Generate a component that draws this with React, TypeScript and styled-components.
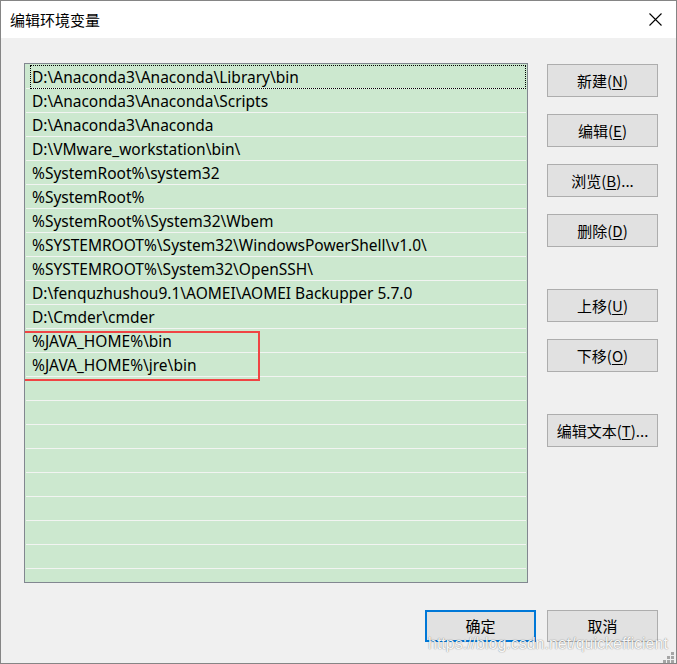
import React from "react";
import styled, { createGlobalStyle } from "styled-components";

const GlobalStyle = createGlobalStyle`
  html, body { margin: 0; padding: 0; background: #ffffff; }
  * { box-sizing: border-box; }
`;

const UI_FONT = `"Noto Sans", "Noto Sans CJK SC", sans-serif`;

const Window = styled.div`
  position: relative;
  width: 677px;
  height: 664px;
  border: 1px solid #858585;
  background: #f0f0f0;
  display: flex;
  flex-direction: column;
  font-family: ${UI_FONT};
  color: #000;
  overflow: hidden;
`;

const TitleBar = styled.div`
  height: 37px;
  flex: none;
  background: #ffffff;
  display: flex;
  align-items: center;
  justify-content: space-between;
  padding-left: 9px;
`;

const Title = styled.span`
  font-family: "Noto Sans CJK SC", sans-serif;
  font-size: 15px;
  line-height: 20px;
`;

const CloseButton = styled.div`
  width: 42px;
  height: 37px;
  display: flex;
  align-items: center;
  justify-content: center;
`;

const Body = styled.div`
  flex: 1;
  display: flex;
  flex-direction: column;
  padding: 25px 18px 0 23px;
`;

const MainRow = styled.div`
  display: flex;
  gap: 19px;
`;

const List = styled.div`
  position: relative;
  width: 504px;
  height: 520px;
  border: 1px solid #828790;
  background: #cce8cf;
  padding: 1px;
  overflow: hidden;
`;

const Row = styled.div<{ $focused?: boolean }>`
  position: relative;
  height: 24px;
  border-bottom: 1px solid #f2f4f2;
  padding-left: 6px;
  font-size: 15.5px;
  line-height: 24px;
  white-space: nowrap;
  ${(p) =>
    p.$focused &&
    `
    &::before {
      content: "";
      position: absolute;
      left: 4px;
      right: 0;
      top: 0;
      bottom: -1px;
      border: 1px dotted #000;
    }
  `}
`;

const Highlight = styled.div`
  position: absolute;
  left: -2px;
  top: 267px;
  width: 237px;
  height: 50px;
  border: 2px solid #f04444;
  pointer-events: none;
`;

const ButtonColumn = styled.div`
  display: flex;
  flex-direction: column;
  gap: 17px;
  padding-top: 1px;
`;

const Button = styled.div<{ $spaced?: boolean; $default?: boolean }>`
  width: 111px;
  height: ${(p) => (p.$default ? "32px" : "33px")};
  margin-top: ${(p) => (p.$spaced ? "25px" : "0")};
  background: #e1e1e1;
  border: ${(p) => (p.$default ? "2px solid #0078d7" : "1px solid #adadad")};
  display: flex;
  align-items: center;
  justify-content: center;
  font-family: "Noto Sans CJK SC", sans-serif;
  font-size: 15px;
  line-height: 20px;
  white-space: nowrap;
`;

const FooterButton = styled(Button)`
  height: 32px;
`;

const Key = styled.span`
  text-decoration: underline;
  text-underline-offset: 2px;
`;

const Footer = styled.div`
  margin-top: 27px;
  display: flex;
  justify-content: flex-end;
  gap: 11px;
`;

const Watermark = styled.div`
  position: absolute;
  left: 427px;
  top: 634px;
  font-family: "Liberation Sans", Arial, sans-serif;
  font-size: 16px;
  line-height: 18px;
  color: rgba(255, 255, 255, 0.95);
  text-shadow: 0 0 1px rgba(0, 0, 0, 0.45), 0 0 2px rgba(0, 0, 0, 0.15);
  white-space: nowrap;
  pointer-events: none;
`;

const Grip = styled.svg`
  position: absolute;
  right: 2px;
  bottom: 0px;
`;

const paths = [
  "D:\\Anaconda3\\Anaconda\\Library\\bin",
  "D:\\Anaconda3\\Anaconda\\Scripts",
  "D:\\Anaconda3\\Anaconda",
  "D:\\VMware_workstation\\bin\\",
  "%SystemRoot%\\system32",
  "%SystemRoot%",
  "%SystemRoot%\\System32\\Wbem",
  "%SYSTEMROOT%\\System32\\WindowsPowerShell\\v1.0\\",
  "%SYSTEMROOT%\\System32\\OpenSSH\\",
  "D:\\fenquzhushou9.1\\AOMEI\\AOMEI Backupper 5.7.0",
  "D:\\Cmder\\cmder",
  "%JAVA_HOME%\\bin",
  "%JAVA_HOME%\\jre\\bin",
];

const TOTAL_ROWS = 22;

type Btn = { label: string; key: string; tail?: string; spaced?: boolean };

const sideButtons: Btn[] = [
  { label: "新建", key: "N" },
  { label: "编辑", key: "E" },
  { label: "浏览", key: "B", tail: "..." },
  { label: "删除", key: "D" },
  { label: "上移", key: "U", spaced: true },
  { label: "下移", key: "O" },
  { label: "编辑文本", key: "T", tail: "...", spaced: true },
];

export default function App() {
  const rows = Array.from({ length: TOTAL_ROWS }, (_, i) => paths[i] ?? "");
  return (
    <>
      <GlobalStyle />
      <Window>
        <TitleBar>
          <Title>编辑环境变量</Title>
          <CloseButton>
            <svg width="13" height="13" viewBox="0 0 13 13">
              <path d="M0.5 0.5 L12.5 12.5 M12.5 0.5 L0.5 12.5" stroke="#000" strokeWidth="1.1" fill="none" />
            </svg>
          </CloseButton>
        </TitleBar>
        <Body>
          <MainRow>
            <List>
              {rows.map((text, i) => (
                <Row key={i} $focused={i === 0}>
                  {text}
                </Row>
              ))}
              <Highlight />
            </List>
            <ButtonColumn>
              {sideButtons.map((b) => (
                <Button key={b.key} $spaced={b.spaced}>
                  {b.label}(<Key>{b.key}</Key>){b.tail ?? ""}
                </Button>
              ))}
            </ButtonColumn>
          </MainRow>
          <Footer>
            <FooterButton $default>确定</FooterButton>
            <FooterButton>取消</FooterButton>
          </Footer>
        </Body>
        <Watermark>https://blog.csdn.net/quickefficient</Watermark>
        <Grip width="11" height="11" viewBox="0 0 11 11">
          <g fill="#a5a5a5">
            <rect x="8" y="0" width="3" height="3" />
            <rect x="4" y="4" width="3" height="3" />
            <rect x="8" y="4" width="3" height="3" />
            <rect x="0" y="8" width="3" height="3" />
            <rect x="4" y="8" width="3" height="3" />
            <rect x="8" y="8" width="3" height="3" />
          </g>
        </Grip>
      </Window>
    </>
  );
}
